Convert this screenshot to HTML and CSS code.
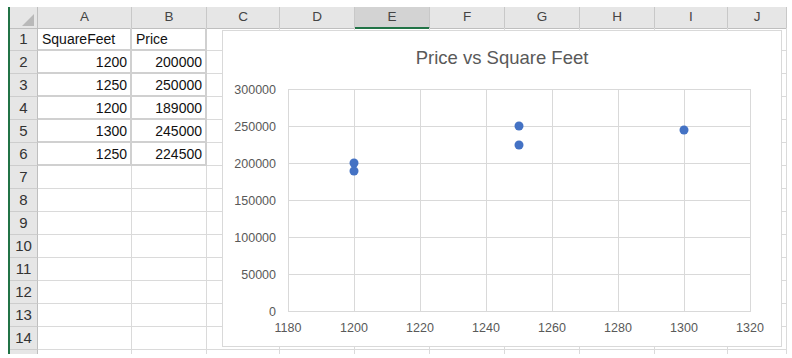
FILE: index.html
```html
<!DOCTYPE html>
<html lang="en">
<head>
    <meta charset="UTF-8">
    <meta name="viewport" content="width=device-width, initial-scale=1.0">
    <title>Price vs Square Feet</title>
    <link rel="stylesheet" href="styles.css">
</head>
<body>
    <div class="sheet">
        <div class="row head">
            <div class="corner"></div>
            <div class="ch">A</div>
            <div class="ch">B</div>
            <div class="ch">C</div>
            <div class="ch">D</div>
            <div class="ch sel">E</div>
            <div class="ch">F</div>
            <div class="ch">G</div>
            <div class="ch">H</div>
            <div class="ch">I</div>
            <div class="ch">J</div>
        </div>
        <div class="row">
            <div class="rh">1</div>
            <div class="c t">SquareFeet</div><div class="c t">Price</div>
            <div class="c"></div><div class="c"></div><div class="c"></div><div class="c"></div><div class="c"></div><div class="c"></div><div class="c"></div><div class="c"></div>
        </div>
        <div class="row">
            <div class="rh">2</div>
            <div class="c t n">1200</div><div class="c t n">200000</div>
            <div class="c"></div><div class="c"></div><div class="c"></div><div class="c"></div><div class="c"></div><div class="c"></div><div class="c"></div><div class="c"></div>
        </div>
        <div class="row">
            <div class="rh">3</div>
            <div class="c t n">1250</div><div class="c t n">250000</div>
            <div class="c"></div><div class="c"></div><div class="c"></div><div class="c"></div><div class="c"></div><div class="c"></div><div class="c"></div><div class="c"></div>
        </div>
        <div class="row">
            <div class="rh">4</div>
            <div class="c t n">1200</div><div class="c t n">189000</div>
            <div class="c"></div><div class="c"></div><div class="c"></div><div class="c"></div><div class="c"></div><div class="c"></div><div class="c"></div><div class="c"></div>
        </div>
        <div class="row">
            <div class="rh">5</div>
            <div class="c t n">1300</div><div class="c t n">245000</div>
            <div class="c"></div><div class="c"></div><div class="c"></div><div class="c"></div><div class="c"></div><div class="c"></div><div class="c"></div><div class="c"></div>
        </div>
        <div class="row">
            <div class="rh">6</div>
            <div class="c t n">1250</div><div class="c t n">224500</div>
            <div class="c"></div><div class="c"></div><div class="c"></div><div class="c"></div><div class="c"></div><div class="c"></div><div class="c"></div><div class="c"></div>
        </div>
        <div class="row">
            <div class="rh">7</div>
            <div class="c"></div><div class="c"></div><div class="c"></div><div class="c"></div><div class="c"></div><div class="c"></div><div class="c"></div><div class="c"></div><div class="c"></div><div class="c"></div>
        </div>
        <div class="row">
            <div class="rh">8</div>
            <div class="c"></div><div class="c"></div><div class="c"></div><div class="c"></div><div class="c"></div><div class="c"></div><div class="c"></div><div class="c"></div><div class="c"></div><div class="c"></div>
        </div>
        <div class="row">
            <div class="rh">9</div>
            <div class="c"></div><div class="c"></div><div class="c"></div><div class="c"></div><div class="c"></div><div class="c"></div><div class="c"></div><div class="c"></div><div class="c"></div><div class="c"></div>
        </div>
        <div class="row">
            <div class="rh">10</div>
            <div class="c"></div><div class="c"></div><div class="c"></div><div class="c"></div><div class="c"></div><div class="c"></div><div class="c"></div><div class="c"></div><div class="c"></div><div class="c"></div>
        </div>
        <div class="row">
            <div class="rh">11</div>
            <div class="c"></div><div class="c"></div><div class="c"></div><div class="c"></div><div class="c"></div><div class="c"></div><div class="c"></div><div class="c"></div><div class="c"></div><div class="c"></div>
        </div>
        <div class="row">
            <div class="rh">12</div>
            <div class="c"></div><div class="c"></div><div class="c"></div><div class="c"></div><div class="c"></div><div class="c"></div><div class="c"></div><div class="c"></div><div class="c"></div><div class="c"></div>
        </div>
        <div class="row">
            <div class="rh">13</div>
            <div class="c"></div><div class="c"></div><div class="c"></div><div class="c"></div><div class="c"></div><div class="c"></div><div class="c"></div><div class="c"></div><div class="c"></div><div class="c"></div>
        </div>
        <div class="row">
            <div class="rh">14</div>
            <div class="c"></div><div class="c"></div><div class="c"></div><div class="c"></div><div class="c"></div><div class="c"></div><div class="c"></div><div class="c"></div><div class="c"></div><div class="c"></div>
        </div>
        <div class="row stub">
            <div class="rh"></div>
            <div class="c"></div><div class="c"></div><div class="c"></div><div class="c"></div><div class="c"></div><div class="c"></div><div class="c"></div><div class="c"></div><div class="c"></div><div class="c"></div>
        </div>

        <!-- chart floats over the cells -->
        <div class="chart">
            <svg width="560" height="317" viewBox="0 0 560 317">
                <rect x="0.5" y="0.5" width="559" height="316" fill="#fff" stroke="#d9d9d9"/>
                <text class="title" x="280" y="34" text-anchor="middle">Price vs Square Feet</text>

                <g stroke="#d9d9d9" stroke-width="1">
                    <line x1="66" y1="59.5" x2="528" y2="59.5"/>
                    <line x1="66" y1="96.5" x2="528" y2="96.5"/>
                    <line x1="66" y1="133.5" x2="528" y2="133.5"/>
                    <line x1="66" y1="170.5" x2="528" y2="170.5"/>
                    <line x1="66" y1="207.5" x2="528" y2="207.5"/>
                    <line x1="66" y1="244.5" x2="528" y2="244.5"/>
                    <line x1="66" y1="281.5" x2="528" y2="281.5"/>
                    <line x1="66.5" y1="59" x2="66.5" y2="282"/>
                    <line x1="132.5" y1="59" x2="132.5" y2="282"/>
                    <line x1="198.5" y1="59" x2="198.5" y2="282"/>
                    <line x1="264.5" y1="59" x2="264.5" y2="282"/>
                    <line x1="330.5" y1="59" x2="330.5" y2="282"/>
                    <line x1="396.5" y1="59" x2="396.5" y2="282"/>
                    <line x1="462.5" y1="59" x2="462.5" y2="282"/>
                    <line x1="528.5" y1="59" x2="528.5" y2="282"/>
                </g>

                <g class="tick" text-anchor="end">
                    <text x="54" y="64">300000</text>
                    <text x="54" y="101">250000</text>
                    <text x="54" y="138">200000</text>
                    <text x="54" y="175">150000</text>
                    <text x="54" y="212">100000</text>
                    <text x="54" y="249">50000</text>
                    <text x="54" y="286">0</text>
                </g>
                <g class="tick" text-anchor="middle">
                    <text x="66" y="302">1180</text>
                    <text x="132" y="302">1200</text>
                    <text x="198" y="302">1220</text>
                    <text x="264" y="302">1240</text>
                    <text x="330" y="302">1260</text>
                    <text x="396" y="302">1280</text>
                    <text x="462" y="302">1300</text>
                    <text x="528" y="302">1320</text>
                </g>

                <g fill="#4472c4">
                    <circle cx="132" cy="133" r="4.5"/>
                    <circle cx="132" cy="141" r="4.5"/>
                    <circle cx="297" cy="96" r="4.5"/>
                    <circle cx="297" cy="115" r="4.5"/>
                    <circle cx="462" cy="100" r="4.5"/>
                </g>
            </svg>
        </div>
    </div>
</body>
</html>
```

FILE: styles.css
```css
* {
    box-sizing: border-box;
}

body {
    margin: 0;
    background-color: #fff;
    font-family: "Liberation Sans", Arial, sans-serif;
}

.sheet {
    position: relative;
    width: 779px;
    margin: 7px 0 0 8px;
    border-left: 2px solid #217346;
}

.row {
    display: grid;
    grid-template-columns: 28px 94px 75px 73px 75px 75px 75px 75px 75px 73px 59px;
    height: 23px;
}

.head {
    height: 21px;
}

.corner {
    position: relative;
    background-color: #e6e6e6;
    border-right: 1px solid #bfbfbf;
    border-bottom: 1px solid #bfbfbf;
}

.corner::after {
    content: "";
    position: absolute;
    right: 3px;
    bottom: 2px;
    border-left: 12px solid transparent;
    border-bottom: 12px solid #b9b9b9;
}

.ch {
    background-color: #e6e6e6;
    border-right: 1px solid #c8c8c8;
    border-bottom: 1px solid #bfbfbf;
    text-align: center;
    font-size: 13.5px;
    line-height: 20px;
    color: #444;
}

.ch.sel {
    background-color: #d3d3d3;
    border-bottom: 2px solid #217346;
}

.rh {
    background-color: #e6e6e6;
    border-right: 1px solid #bfbfbf;
    border-bottom: 1px solid #cdcdcd;
    text-align: center;
    font-size: 15px;
    line-height: 22px;
    color: #333;
}

.c {
    border-right: 1px solid #dadada;
    border-bottom: 1px solid #dadada;
    padding: 0 3px 0 4px;
    font-size: 14px;
    line-height: 22px;
    color: #111;
    white-space: nowrap;
    overflow: hidden;
}

.c.t {
    border-right: 2px solid #d0d0d0;
    border-bottom: 2px solid #d0d0d0;
}

.c.n {
    text-align: right;
}

.stub {
    height: 4px;
}

.stub .rh,
.stub .c {
    border-bottom: none;
}

.chart {
    position: absolute;
    left: 212px;
    top: 23px;
    width: 560px;
    height: 317px;
}

.chart svg {
    display: block;
}

.title {
    font-family: "Liberation Sans", Arial, sans-serif;
    font-size: 18.5px;
    fill: #595959;
}

.tick {
    font-family: "Liberation Sans", Arial, sans-serif;
    font-size: 12.5px;
    fill: #595959;
}
```
